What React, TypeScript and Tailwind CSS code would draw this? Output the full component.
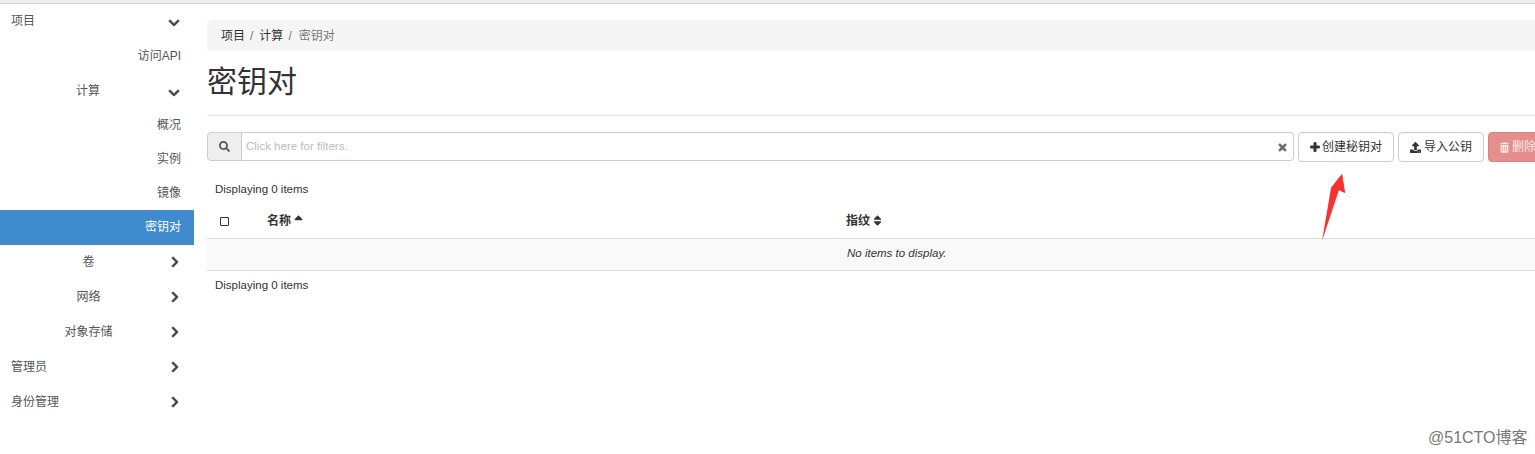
import { FaChevronDown, FaChevronRight, FaSearch, FaTimes, FaPlus, FaTrashAlt, FaSort, FaSortUp, FaUpload } from 'react-icons/fa';

const font = "font-['Liberation_Sans','Noto_Sans_CJK_SC',sans-serif]";

function GroupRow({ label, open, nested, low }: { label: string; open?: boolean; nested?: boolean; low?: boolean }) {
  return (
    <div className={`flex h-[35px] items-center text-[#555] ${low ? '' : 'pb-[2px]'} ${open ? 'pr-[14px]' : 'pr-[13px]'}`}>
      <span className={nested ? 'flex-1 pl-2 text-center' : 'flex-1 pl-[11px]'}>{label}</span>
      {open ? (
        <FaChevronDown className="mt-[4px] h-3 w-3 text-[#444]" stroke="currentColor" strokeWidth={30} />
      ) : (
        <FaChevronRight className="mt-[1px] h-3 w-3 text-[#444]" stroke="currentColor" strokeWidth={30} />
      )}
    </div>
  );
}

function LeafRow({ label, active }: { label: string; active?: boolean }) {
  return (
    <div
      className={
        active
          ? 'flex h-[35px] items-center justify-end bg-[#3f8bcd] pb-[2px] pr-[13px] text-white'
          : 'flex h-[34px] items-center justify-end pr-[13px] text-[#555]'
      }
    >
      {label}
    </div>
  );
}

export default function App() {
  return (
    <div className={`${font} h-[454px] w-[1535px] overflow-hidden bg-white text-xs text-[#333]`}>
      <div className="h-[4px] border-b border-[#ccc] bg-[#eee]" />
      <div className="flex">
        {/* Sidebar */}
        <aside className="w-[194px] shrink-0">
          <GroupRow label="项目" open />
          <LeafRow label="访问API" />
          <GroupRow label="计算" open nested low />
          <LeafRow label="概况" />
          <LeafRow label="实例" />
          <LeafRow label="镜像" />
          <LeafRow label="密钥对" active />
          <GroupRow label="卷" nested />
          <GroupRow label="网络" nested />
          <GroupRow label="对象存储" nested />
          <GroupRow label="管理员" />
          <GroupRow label="身份管理" />
        </aside>

        {/* Content */}
        <main className="ml-[13px] w-[1377px] shrink-0 pt-4">
          <div className="flex h-[31px] items-center rounded-l-[4px] bg-[#f5f5f5] pl-[14px]">
            <span>项目</span>
            <span className="ml-[5px] mr-[6px] text-[#777]">/</span>
            <span>计算</span>
            <span className="ml-[5px] mr-[7px] text-[#777]">/</span>
            <span className="text-[#777]">密钥对</span>
          </div>
          <div className="h-[65px] border-b border-[#e6e6e6] pt-[13px] text-[30px] leading-[36px]">密钥对</div>

          <div className="mt-4 flex h-[30px] items-start">
            <div className="flex h-[29px] w-[35px] shrink-0 items-center justify-center rounded-l-[4px] border border-[#ccc] bg-[#eee] text-[#555]">
              <FaSearch className="h-[11px] w-[11px]" />
            </div>
            <div className="flex h-[29px] w-[1052px] shrink-0 items-center justify-between rounded-r-[4px] border border-l-0 border-[#ccc] pl-[4px] pr-[5px]">
              <span className="text-[11.5px] text-[#bbb]">Click here for filters.</span>
              <FaTimes className="mt-[2px] h-[11px] w-[11px] text-[#666]" stroke="currentColor" strokeWidth={30} />
            </div>
            <button className="ml-1 flex h-[30px] w-[96px] shrink-0 items-center justify-center gap-[2px] rounded-[4px] border border-[#ccc] bg-white text-[#333]">
              <FaPlus className="h-[10px] w-[10px]" stroke="currentColor" strokeWidth={60} />
              <span>创建秘钥对</span>
            </button>
            <button className="ml-1 flex h-[30px] w-[86px] shrink-0 items-center justify-center gap-[3px] rounded-[4px] border border-[#ccc] bg-white text-[#333]">
              <FaUpload className="h-[11px] w-[11px]" />
              <span>导入公钥</span>
            </button>
            <button className="ml-1 flex h-[30px] w-[96px] shrink-0 items-center justify-start gap-[3px] rounded-[4px] border border-[#d9827f] bg-[#e58e8b] pl-[11px] text-[#fbeaea]">
              <FaTrashAlt className="h-[11px] w-[9px]" />
              <span>删除</span>
            </button>
          </div>

          <div className="mt-[19px] pl-2 text-[11.5px] leading-[16px]">Displaying 0 items</div>

          <div className="mt-[8px] flex h-[34px] items-center border-b border-[#ddd] pb-[2px] font-bold">
            <div className="flex w-[60px] justify-center pr-[25px]">
              <span className="mt-[2px] h-[9px] w-[9px] rounded-[1px] border border-[#333] bg-white" />
            </div>
            <div className="flex w-[579px] items-center gap-[3px]">
              名称
              <FaSortUp className="h-[14px] w-[9px]" />
            </div>
            <div className="flex items-center gap-[3px]">
              指纹
              <FaSort className="h-[13px] w-[9px]" />
            </div>
          </div>
          <div className="flex h-[32px] items-center border-b border-[#ddd] bg-[#f9f9f9] pb-[2px] pl-[640px] text-[11.5px] italic">
            No items to display.
          </div>
          <div className="mt-[6px] pl-2 text-[11.5px] leading-[16px]">Displaying 0 items</div>
        </main>
      </div>

      {/* Annotation arrow on top of the screenshot */}
      <svg className="absolute left-[1315px] top-[170px]" width="36" height="76" viewBox="0 0 36 76">
        <polygon points="27,4 30,23 24,20 7,71 16,18 16,18" fill="#f63232" />
        <polygon points="27,4 16,18 24,20 30,23" fill="#f63232" />
      </svg>

      {/* Watermark */}
      <div className="absolute left-[1428px] top-[429px] text-[16px] leading-[18px] text-[#777]">@51CTO博客</div>
    </div>
  );
}
